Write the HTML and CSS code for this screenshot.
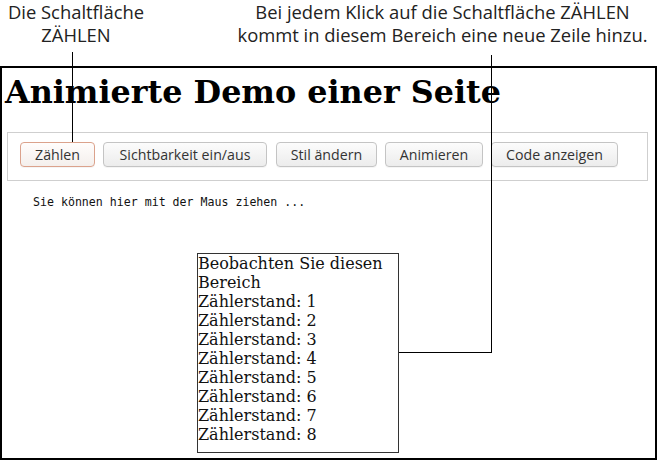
FILE: index.html
```html
<!DOCTYPE html>
<html lang="de">
<head>
<meta charset="utf-8">
<title>Animierte Demo</title>
<link rel="stylesheet" href="styles.css">
</head>
<body>
<div class="notes">
  <div class="note note-left"><div>Die Schaltfläche</div><div>ZÄHLEN</div></div>
  <div class="note note-right"><div>Bei jedem Klick auf die Schaltfläche ZÄHLEN</div><div>kommt in diesem Bereich eine neue Zeile hinzu.</div></div>
</div>
<div class="frame">
  <h1 class="title">Animierte Demo einer Seite</h1>
  <div class="toolbar">
    <button class="btn btn-count">Zählen</button>
    <button class="btn btn-vis">Sichtbarkeit ein/aus</button>
    <button class="btn btn-style">Stil ändern</button>
    <button class="btn btn-anim">Animieren</button>
    <button class="btn btn-code">Code anzeigen</button>
  </div>
  <pre class="hint">Sie können hier mit der Maus ziehen ...</pre>
  <div class="watch">Beobachten Sie diesen Bereich<br>Zählerstand: 1<br>Zählerstand: 2<br>Zählerstand: 3<br>Zählerstand: 4<br>Zählerstand: 5<br>Zählerstand: 6<br>Zählerstand: 7<br>Zählerstand: 8</div>
</div>
<div class="callout callout-a"></div>
<div class="callout callout-b-v"></div>
<div class="callout callout-b-h"></div>
</body>
</html>
```
FILE: styles.css
```css
html, body {
  margin: 0;
  padding: 0;
  background: #fff;
}
body {
  width: 657px;
  height: 460px;
  position: relative;
  overflow: hidden;
}
.notes {
  height: 66px;
  display: flex;
  font-family: "Open Sans", sans-serif;
  font-size: 18.4px;
  line-height: 23px;
  color: #222;
}
.note {
  text-align: center;
  white-space: nowrap;
}
.note-left {
  width: 152px;
}
.note-right {
  margin-left: 80px;
  width: 421px;
}
.frame {
  box-sizing: border-box;
  height: 394px;
  border: 2px solid #000;
  padding: 0 3px;
}
.title {
  margin: 5px 0 0 0;
  font-family: "DejaVu Serif", serif;
  font-weight: bold;
  font-size: 31.8px;
  line-height: 37px;
  color: #000;
}
.toolbar {
  margin: 22px 4px 0 2px;
  border: 1px solid #cfcfcf;
  display: flex;
  align-items: flex-start;
  padding: 9px 0 0 12px;
  box-sizing: border-box;
  height: 49px;
  gap: 8px;
}
.btn {
  height: 25px;
  padding: 0;
  border: 1px solid #c4c4c4;
  border-radius: 4px;
  background: linear-gradient(#fcfcfc, #ececec);
  font-family: "Open Sans", sans-serif;
  font-size: 14.2px;
  color: #333;
  text-align: center;
  box-shadow: 0 1px 0 rgba(0,0,0,0.04);
}
.btn-count {
  width: 75px;
  border-color: #dba28c;
  background: linear-gradient(#fffdfc, #f4efec);
}
.btn-vis { width: 164px; }
.btn-style { width: 101px; margin-left: 1px; }
.btn-anim { width: 98px; }
.btn-code { width: 127px; }
.hint {
  margin: 14px 0 0 28px;
  font-family: "DejaVu Sans Mono", monospace;
  font-size: 11.6px;
  line-height: 14px;
  color: #111;
}
.watch {
  margin: 44px 0 0 192px;
  width: 200px;
  height: 198px;
  border: 1px solid #333;
  font-family: "DejaVu Serif", serif;
  font-size: 16px;
  line-height: 19px;
  color: #111;
}
.callout {
  position: absolute;
  background: #000;
}
.callout-a {
  left: 72px;
  top: 52px;
  width: 1px;
  height: 90px;
}
.callout-b-v {
  left: 491px;
  top: 55px;
  width: 1px;
  height: 298px;
}
.callout-b-h {
  left: 399px;
  top: 352px;
  width: 93px;
  height: 1px;
}
```
